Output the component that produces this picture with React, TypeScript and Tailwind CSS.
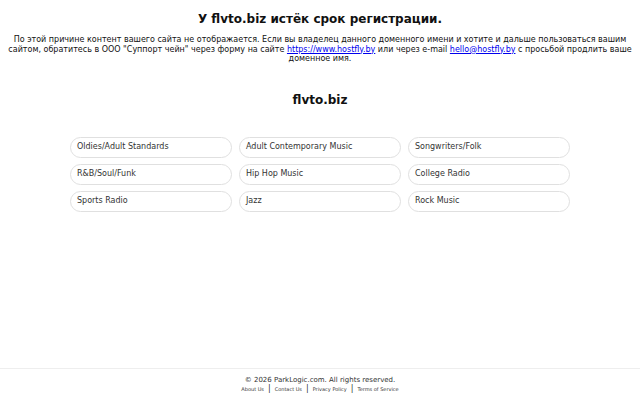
import React from "react";

const categories = [
  "Oldies/Adult Standards",
  "Adult Contemporary Music",
  "Songwriters/Folk",
  "R&B/Soul/Funk",
  "Hip Hop Music",
  "College Radio",
  "Sports Radio",
  "Jazz",
  "Rock Music",
];

const links = ["About Us", "Contact Us", "Privacy Policy", "Terms of Service"];

const App: React.FC = () => {
  return (
    <div
      className="w-full h-[400px] flex flex-col bg-white text-[#111]"
      style={{ fontFamily: '"DejaVu Sans", sans-serif' }}
    >
      <div className="flex-1 flex flex-col items-center">
        <h1 className="mt-[11px] text-[12px] leading-[16px] font-bold">
          У flvto.biz истёк срок регистрации.
        </h1>
        <p className="mt-[8px] px-2 text-center text-[8px] leading-[9.5px]">
          По этой причине контент вашего сайта не отображается. Если вы владелец данного доменного имени и
          хотите и дальше пользоваться вашим сайтом, обратитесь в ООО "Суппорт чейн" через форму на сайте{" "}
          <a className="text-[#0000ee] underline" href="#">
            https://www.hostfly.by
          </a>{" "}
          или через e-mail{" "}
          <a className="text-[#0000ee] underline" href="#">
            hello@hostfly.by
          </a>{" "}
          с просьбой продлить ваше доменное имя.
        </p>
        <h2 className="mt-[28px] text-[12px] leading-[16px] font-bold">flvto.biz</h2>
        <div className="mt-[29px] w-[500px] grid grid-cols-3 gap-x-[7px] gap-y-[6px]">
          {categories.map((c) => (
            <a
              key={c}
              href="#"
              className="h-[21px] flex items-center pl-[6px] text-[8px] text-[#333] border border-[#e0e0e0] rounded-full"
            >
              {c}
            </a>
          ))}
        </div>
      </div>
      <footer className="h-[32px] border-t border-[#eee] flex flex-col items-center pt-[7px]">
        <div className="text-[7px] leading-[9px] text-[#333]">© 2026 ParkLogic.com. All rights reserved.</div>
        <div className="flex items-center text-[5px] leading-[8px] text-[#333]">
          {links.map((l, i) => (
            <React.Fragment key={l}>
              {i > 0 && <span className="mx-[4px] text-[8px] leading-[8px]">|</span>}
              <a href="#">{l}</a>
            </React.Fragment>
          ))}
        </div>
      </footer>
    </div>
  );
};

export default App;
